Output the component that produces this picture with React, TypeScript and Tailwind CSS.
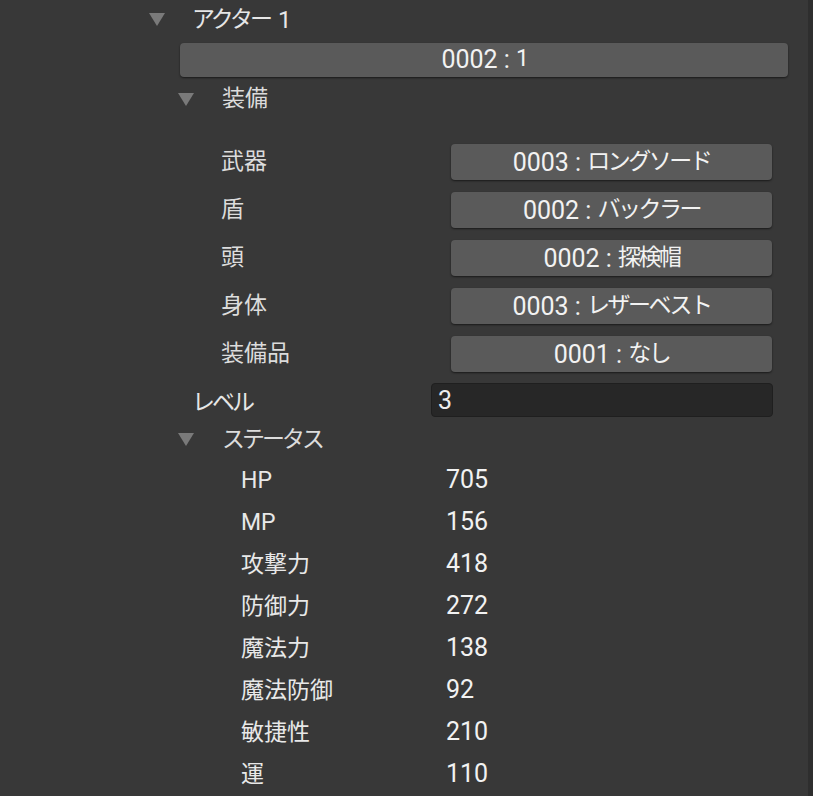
import React from 'react';

const FONT = { fontFamily: 'Roboto, "Noto Sans CJK JP", sans-serif' };

const Caret = ({ className = '' }: { className?: string }) => (
  <svg viewBox="0 0 16 14" className={`w-[16px] h-[14px] ${className}`}>
    <polygon points="0,0 16,0 8,13" fill="#7a7a7a" />
  </svg>
);

const equipment = [
  { label: '武器', id: '0003', name: 'ロングソード' },
  { label: '盾', id: '0002', name: 'バックラー' },
  { label: '頭', id: '0002', name: '探検帽' },
  { label: '身体', id: '0003', name: 'レザーベスト' },
  { label: '装備品', id: '0001', name: 'なし' },
];

const stats = [
  { label: 'HP', value: 705 },
  { label: 'MP', value: 156 },
  { label: '攻撃力', value: 418 },
  { label: '防御力', value: 272 },
  { label: '魔法力', value: 138 },
  { label: '魔法防御', value: 92 },
  { label: '敏捷性', value: 210 },
  { label: '運', value: 110 },
];

const PopupButton = ({ id, name }: { id: string; name: string }) => (
  <div className="flex items-center justify-center h-full rounded-[4px] bg-[#5a5a5a] shadow-[0_1px_2px_rgba(0,0,0,0.55)] text-[#f2f2f2]">
    <span className="text-[25px] whitespace-pre">{id} : </span>
    <span className="text-[23px] tracking-[-2.5px]">{name}</span>
  </div>
);

export default function App() {
  return (
    <div
      className="w-[813px] h-[796px] bg-[#383838] overflow-hidden flex"
      style={FONT}
    >
      <div className="flex-1 flex flex-col">
        {/* Actor header */}
        <div className="h-[40px] flex items-center">
          <Caret className="ml-[149px]" />
          <span className="ml-[27px] text-[23px] text-[#e6e6e6] tracking-[-3px]">アクター</span>
          <span className="ml-[8px] text-[24px] text-[#e6e6e6]">1</span>
        </div>

        <div className="mt-[3px] h-[34px] ml-[180px] w-[608px]">
          <PopupButton id="0002" name="1" />
        </div>

        {/* Equipment */}
        <div className="mt-[3px] h-[40px] flex items-center">
          <Caret className="ml-[178px]" />
          <span className="ml-[28px] text-[23px] text-[#dcdcdc]">装備</span>
        </div>

        <div className="mt-[25px] flex flex-col gap-[12px]">
          {equipment.map((e) => (
            <div key={e.label} className="h-[36px] flex items-center">
              <span className="ml-[221px] w-[230px] text-[23px] text-[#dcdcdc]">{e.label}</span>
              <div className="h-full w-[321px]">
                <PopupButton id={e.id} name={e.name} />
              </div>
            </div>
          ))}
        </div>

        {/* Level */}
        <div className="mt-[11px] h-[34px] flex items-center">
          <span className="ml-[192px] w-[239px] pt-[5px] text-[23px] text-[#e6e6e6] tracking-[-3px]">レベル</span>
          <div className="h-full w-[342px] rounded-[4px] bg-[#272727] border border-[#1f1f1f] flex items-center px-[6px] text-[25px] text-[#eeeeee]">
            3
          </div>
        </div>

        {/* Status */}
        <div className="mt-[3px] h-[40px] flex items-center">
          <Caret className="ml-[178px]" />
          <span className="ml-[28px] text-[23px] text-[#dcdcdc] tracking-[-3px]">ステータス</span>
        </div>

        <div className="flex flex-col">
          {stats.map((s) => (
            <div key={s.label} className="h-[42px] flex items-center">
              <span className="ml-[241px] w-[205px] text-[23px] text-[#e8e8e8]">{s.label}</span>
              <span className="text-[25px] text-[#f2f2f2] -mt-[3px]">{s.value}</span>
            </div>
          ))}
        </div>
      </div>
      <div className="w-[5px] h-full bg-[#2e2e2e]" />
    </div>
  );
}
